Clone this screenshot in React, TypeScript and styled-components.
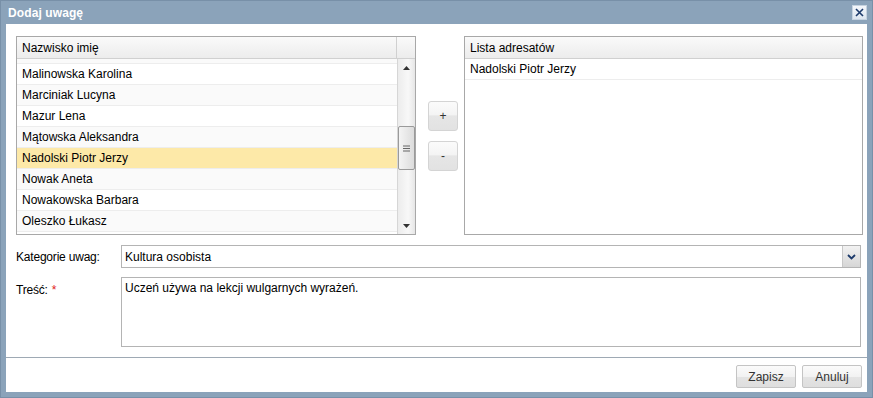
import React from 'react';
import styled, { createGlobalStyle } from 'styled-components';

const GlobalStyle = createGlobalStyle`
  html, body {
    margin: 0;
    padding: 0;
    background: #8ba3ba;
  }
  body {
    font-family: Tahoma, "Liberation Sans", "DejaVu Sans", sans-serif;
    font-size: 12px;
    color: #000;
  }
`;

const Window = styled.div`
  width: 873px;
  height: 398px;
  box-sizing: border-box;
  background: #8ba3ba;
  border: 1px solid #7890a8;
  display: flex;
  flex-direction: column;
`;

const TitleBar = styled.div`
  height: 23px;
  display: flex;
  align-items: center;
  justify-content: space-between;
  padding: 0 5px 0 7px;
`;

const Title = styled.span`
  color: #fff;
  font-weight: bold;
  font-size: 12px;
  letter-spacing: 0.1px;
`;

const CloseBox = styled.div`
  width: 13px;
  height: 13px;
  background: linear-gradient(#f4f7fb, #dde6f0);
  border: 1px solid #c6d3e0;
  display: flex;
  align-items: center;
  justify-content: center;
`;

const Body = styled.div`
  flex: 1;
  margin: 0 5px 5px 5px;
  background: #fff;
  display: flex;
  flex-direction: column;
`;

const Content = styled.div`
  padding: 12px 4px 0 10px;
  display: flex;
  flex-direction: column;
`;

const Lists = styled.div`
  display: flex;
  align-items: center;
`;

const Grid = styled.div<{ $width: number }>`
  width: ${(p) => p.$width}px;
  height: 199px;
  box-sizing: border-box;
  border: 1px solid #a8a8a8;
  display: flex;
  flex-direction: column;
  overflow: hidden;
`;

const HeaderRow = styled.div`
  height: 21px;
  flex: none;
  display: flex;
  border-bottom: 1px solid #d0d0d0;
  background: linear-gradient(#fafafa, #ececec);
`;

const HeaderCell = styled.div<{ $grow?: boolean; $w?: number }>`
  ${(p) => (p.$grow ? 'flex: 1;' : `width: ${p.$w}px;`)}
  display: flex;
  align-items: center;
  padding-left: 5px;
  box-sizing: border-box;
  border-right: 1px solid #d0d0d0;
  &:last-child {
    border-right: none;
  }
`;

const GridBody = styled.div`
  flex: 1;
  display: flex;
  min-height: 0;
`;

const RowsViewport = styled.div`
  flex: 1;
  overflow: hidden;
`;

/* bottom edge of the row scrolled just above the viewport */
const RowTail = styled.div`
  height: 4px;
  background: #fafafa;
  border-bottom: 1px solid #ededed;
`;

const Row = styled.div<{ $alt?: boolean; $selected?: boolean }>`
  height: 20px;
  line-height: 21px;
  padding-left: 5px;
  border-bottom: 1px solid #ededed;
  background: ${(p) => (p.$selected ? '#fde9a8' : p.$alt ? '#fafafa' : '#fff')};
  white-space: nowrap;
`;

const ScrollBar = styled.div`
  width: 18px;
  border-left: 1px solid #d6d6d6;
  background: linear-gradient(to right, #ececec, #f8f8f8 60%, #e6e6e6);
  display: flex;
  flex-direction: column;
  align-items: center;
  box-sizing: border-box;
`;

const ArrowCell = styled.div`
  height: 17px;
  width: 100%;
  display: flex;
  align-items: center;
  justify-content: center;
`;

const Track = styled.div`
  flex: 1;
  width: 100%;
  padding-top: 50px;
  box-sizing: border-box;
`;

const Thumb = styled.div`
  height: 44px;
  border: 1px solid #9a9a9a;
  border-radius: 2px;
  box-sizing: border-box;
  background: linear-gradient(to right, #f4f4f4, #dcdcdc);
  display: flex;
  align-items: center;
  justify-content: center;
`;

const MoveButtons = styled.div`
  width: 30px;
  margin: 0 6px 0 12px;
  display: flex;
  flex-direction: column;
  gap: 10px;
`;

const MoveButton = styled.button`
  width: 30px;
  height: 30px;
  padding: 0;
  border: 1px solid #d4d4d4;
  border-radius: 3px;
  background: linear-gradient(#fbfbfb 0%, #f4f4f4 45%, #e6e6e6 50%, #e2e2e2 100%);
  font-family: inherit;
  font-size: 12px;
  color: #333;
`;

const FormRow = styled.div<{ $top: number }>`
  display: flex;
  align-items: flex-start;
  margin-top: ${(p) => p.$top}px;
`;

const Label = styled.label<{ $pad: number }>`
  width: 105px;
  padding-top: ${(p) => p.$pad}px;
  white-space: nowrap;
  letter-spacing: -0.2px;
`;

const Required = styled.span`
  color: #e02020;
  margin-left: 4px;
`;

const Select = styled.div`
  width: 740px;
  height: 23px;
  box-sizing: border-box;
  border: 1px solid #b4b4b4;
  display: flex;
  align-items: center;
  padding-left: 3px;
`;

const SelectValue = styled.span`
  flex: 1;
`;

const SelectArrow = styled.div`
  width: 17px;
  height: 21px;
  border-left: 1px solid #c8c8c8;
  background: linear-gradient(#f2f2f2, #d6d6d6);
  display: flex;
  align-items: center;
  justify-content: center;
`;

const TextArea = styled.div`
  width: 740px;
  height: 70px;
  box-sizing: border-box;
  border: 1px solid #b4b4b4;
  padding: 3px 3px;
`;

const Footer = styled.div`
  margin-top: 10px;
  border-top: 1px solid #9ea9b4;
  flex: 1;
  display: flex;
  justify-content: flex-end;
  align-items: flex-start;
  padding: 7px 5px 0 0;
  gap: 6px;
`;

const FooterButton = styled.button`
  width: 60px;
  height: 23px;
  padding: 0;
  border: 1px solid #c4c4c4;
  border-radius: 2px;
  background: linear-gradient(#fbfbfb 0%, #f2f2f2 50%, #e4e4e4 51%, #dedede 100%);
  font-family: inherit;
  font-size: 12px;
  color: #333;
`;

const people = [
  'Malinowska Karolina',
  'Marciniak Lucyna',
  'Mazur Lena',
  'Mątowska Aleksandra',
  'Nadolski Piotr Jerzy',
  'Nowak Aneta',
  'Nowakowska Barbara',
  'Oleszko Łukasz',
];

const Triangle = ({ down }: { down?: boolean }) => (
  <svg width="7" height="4" viewBox="0 0 7 4">
    <path d={down ? 'M0 0 H7 L3.5 4 Z' : 'M0 4 H7 L3.5 0 Z'} fill="#333" />
  </svg>
);

const App: React.FC = () => (
  <>
    <GlobalStyle />
    <Window>
      <TitleBar>
        <Title>Dodaj uwagę</Title>
        <CloseBox>
          <svg width="9" height="9" viewBox="0 0 9 9">
            <path d="M1 1 L8 8 M8 1 L1 8" stroke="#1c3a6b" strokeWidth="1.6" />
          </svg>
        </CloseBox>
      </TitleBar>
      <Body>
        <Content>
          <Lists>
            <Grid $width={400}>
              <HeaderRow>
                <HeaderCell $grow>Nazwisko imię</HeaderCell>
                <HeaderCell $w={18} />
              </HeaderRow>
              <GridBody>
                <RowsViewport>
                  <RowTail />
                  {people.map((name, i) => (
                    <Row key={name} $alt={i % 2 === 1} $selected={name === 'Nadolski Piotr Jerzy'}>
                      {name}
                    </Row>
                  ))}
                </RowsViewport>
                <ScrollBar>
                  <ArrowCell>
                    <Triangle />
                  </ArrowCell>
                  <Track>
                    <Thumb>
                      <svg width="7" height="7" viewBox="0 0 7 7">
                        <path d="M0 1 H7 M0 3.5 H7 M0 6 H7" stroke="#666" strokeWidth="1" />
                      </svg>
                    </Thumb>
                  </Track>
                  <ArrowCell>
                    <Triangle down />
                  </ArrowCell>
                </ScrollBar>
              </GridBody>
            </Grid>
            <MoveButtons>
              <MoveButton>+</MoveButton>
              <MoveButton>-</MoveButton>
            </MoveButtons>
            <Grid $width={399}>
              <HeaderRow>
                <HeaderCell $grow>Lista adresatów</HeaderCell>
              </HeaderRow>
              <GridBody>
                <RowsViewport>
                  <Row>Nadolski Piotr Jerzy</Row>
                </RowsViewport>
              </GridBody>
            </Grid>
          </Lists>
          <FormRow $top={10}>
            <Label $pad={5}>Kategorie uwag:</Label>
            <Select>
              <SelectValue>Kultura osobista</SelectValue>
              <SelectArrow>
                <svg width="9" height="6" viewBox="0 0 9 6">
                  <path d="M1 1 L4.5 4.5 L8 1" stroke="#1c3a6b" strokeWidth="1.8" fill="none" />
                </svg>
              </SelectArrow>
            </Select>
          </FormRow>
          <FormRow $top={9}>
            <Label $pad={6}>
              Treść:<Required>*</Required>
            </Label>
            <TextArea>Uczeń używa na lekcji wulgarnych wyrażeń.</TextArea>
          </FormRow>
        </Content>
        <Footer>
          <FooterButton>Zapisz</FooterButton>
          <FooterButton>Anuluj</FooterButton>
        </Footer>
      </Body>
    </Window>
  </>
);

export default App;
